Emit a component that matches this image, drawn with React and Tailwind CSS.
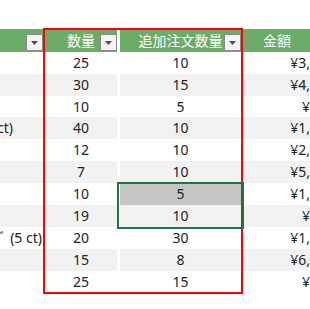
const rows = [
  { a: '', ap: 0, b: '25', c: '10', d: '¥3,000' },
  { a: '', ap: 0, b: '30', c: '15', d: '¥4,500' },
  { a: '', ap: 0, b: '10', c: '5', d: '¥800' },
  { a: 'ナッツ詰め合わせ (10 ct)', ap: 30, b: '40', c: '10', d: '¥1,200' },
  { a: '', ap: 0, b: '12', c: '10', d: '¥2,400' },
  { a: '', ap: 0, b: '7', c: '10', d: '¥5,600' },
  { a: '', ap: 0, b: '10', c: '5', d: '¥1,000', sel: true },
  { a: '', ap: 0, b: '19', c: '10', d: '¥950' },
  { a: 'ﾃｨｰﾊﾞｯｸﾞ (5 ct)', ap: 1, b: '20', c: '30', d: '¥1,400' },
  { a: '', ap: 0, b: '15', c: '8', d: '¥6,000' },
  { a: '', ap: 0, b: '25', c: '15', d: '¥750' },
];

const heights = ['h-[22px]', 'h-[22px]', 'h-[21px]', 'h-[22px]', 'h-[22px]', 'h-[22px]', 'h-[22px]', 'h-[22px]', 'h-[22px]', 'h-[22px]', 'h-[22px]'];

function Drop() {
  return (
    <div className="w-[17px] h-[17px] border border-[#8a8a8a] bg-[#f4f4f4] flex items-center justify-center">
      <svg width="7" height="4" viewBox="0 0 7 4">
        <path d="M0 0H7L3.5 4Z" fill="#505050" />
      </svg>
    </div>
  );
}

export default function App() {
  return (
    <div className="relative w-[310px] h-[309px] overflow-hidden bg-white font-['Noto_Sans','Noto_Sans_CJK_JP',sans-serif] text-[14px] text-[#222] leading-none">
      <div className="h-[29px]" />
      <div className="flex flex-col">
        <div className="flex h-[23px] text-white">
          <div className="w-[43px] shrink-0 bg-[#6aac68] flex items-end justify-end pb-px">
            <Drop />
          </div>
          <div className="w-[2px] shrink-0 bg-[#6aac68]" />
          <div className="w-[72px] shrink-0 bg-[#6aac68] grid">
            <span className="[grid-area:1/1] self-center justify-self-center">数量</span>
            <div className="[grid-area:1/1] self-end justify-self-end pb-px">
              <Drop />
            </div>
          </div>
          <div className="w-[3px] shrink-0" />
          <div className="w-[121px] shrink-0 bg-[#6aac68] grid">
            <span className="[grid-area:1/1] self-center justify-self-center">追加注文数量</span>
            <div className="[grid-area:1/1] self-end justify-self-end pb-px">
              <Drop />
            </div>
          </div>
          <div className="w-[2px] shrink-0" />
          <div className="w-[92px] shrink-0 bg-[#6aac68] flex items-center pl-[20px]">金額</div>
        </div>
        {rows.map((r, i) => {
          const stripe = i % 2 === 1 ? 'bg-[#f2f2f2]' : 'bg-white';
          return (
            <div key={i} className={`flex ${heights[i]}`}>
              <div className={`w-[43px] shrink-0 ${stripe} flex items-center justify-end overflow-hidden whitespace-nowrap`}>
                {r.a && (
                  <span className="shrink-0" style={{ paddingRight: r.ap }}>
                    {r.a}
                  </span>
                )}
              </div>
              <div className={`w-[2px] shrink-0 ${stripe}`} />
              <div className={`w-[72px] shrink-0 ${stripe} flex items-center justify-center`}>{r.b}</div>
              <div className="w-[3px] shrink-0" />
              <div className={`w-[121px] shrink-0 ${r.sel ? 'bg-[#c6c6c6]' : stripe} flex items-center justify-center`}>{r.c}</div>
              <div className="w-[2px] shrink-0" />
              <div className={`w-[92px] shrink-0 ${stripe} flex items-center justify-end pr-[1px] whitespace-nowrap`}>{r.d}</div>
            </div>
          );
        })}
      </div>
      <div className="absolute left-[43px] top-[28px] w-[200px] h-[266px] border-2 border-[#ff0000]" />
      <div className="absolute left-[117px] top-[182px] w-[127px] h-[47px] border-2 border-[#217346]" />
    </div>
  );
}
